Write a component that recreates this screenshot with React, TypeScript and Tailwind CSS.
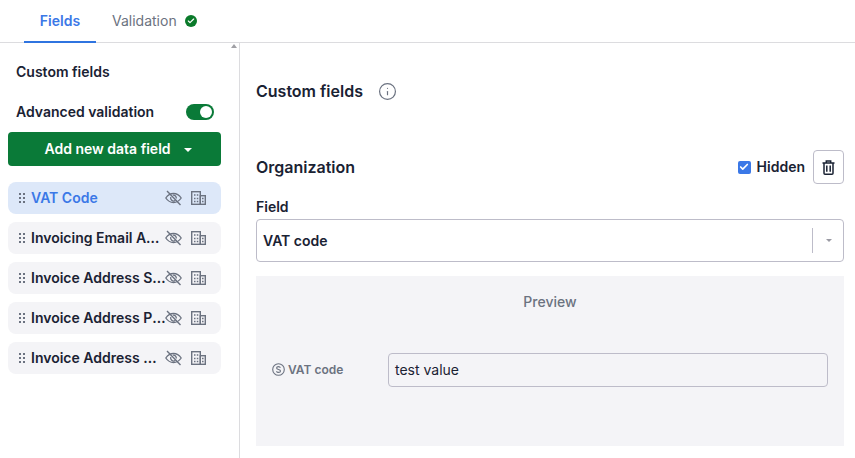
import { Check, Info } from "lucide-react";

const fields = [
  { label: "VAT Code", active: true },
  { label: "Invoicing Email Address" },
  { label: "Invoice Address Street" },
  { label: "Invoice Address Postal" },
  { label: "Invoice Address Country" },
];

function GripIcon() {
  return (
    <svg width="6" height="10" viewBox="0 0 6 10" className="shrink-0 fill-[#6b7280]">
      <rect x="0" y="0" width="2" height="2" />
      <rect x="4" y="0" width="2" height="2" />
      <rect x="0" y="4" width="2" height="2" />
      <rect x="4" y="4" width="2" height="2" />
      <rect x="0" y="8" width="2" height="2" />
      <rect x="4" y="8" width="2" height="2" />
    </svg>
  );
}

function EyeSlashIcon() {
  return (
    <svg width="17" height="16" viewBox="0 0 17 16" fill="none" className="shrink-0 stroke-[#6b7280]" strokeWidth="1.3">
      <path d="M0.8 8C2.8 5 5.4 3.5 8.5 3.5S14.2 5 16.2 8c-2 3-4.6 4.5-7.7 4.5S2.8 11 .8 8Z" />
      <path d="M5.8 7a3 3 0 0 0 4.6 3.4M11.3 8.5A3 3 0 0 0 8 5.1" />
      <path d="M2 1l13.5 14" strokeWidth="1.4" />
    </svg>
  );
}

function BuildingIcon() {
  return (
    <svg width="15" height="14" viewBox="0 0 15 14" fill="none" className="shrink-0 stroke-[#6b7280]" strokeWidth="1.4">
      <rect x="0.7" y="0.7" width="8.6" height="12.6" />
      <rect x="9.3" y="4.7" width="5" height="8.6" />
      <path d="M3 4h1.5M5.8 4h1.5M3 7.5h1.5M5.8 7.5h1.5M3 10.5h1.5M5.8 10.5h1.5M11 7.5h1.6M11 10.5h1.6" />
    </svg>
  );
}

function TrashIcon() {
  return (
    <svg width="13" height="15" viewBox="0 0 13 15" fill="none" className="stroke-[#1a2233]" strokeWidth="1.5">
      <path d="M0.5 3h12M4.3 3V.9h4.4V3" />
      <path d="M2 3v10.2c0 .6.4 1 1 1h7c.6 0 1-.4 1-1V3" />
      <path d="M4.8 5.5v6.2M8.2 5.5v6.2" />
    </svg>
  );
}

function SIcon() {
  return (
    <svg width="13" height="13" viewBox="0 0 13 13" fill="none" className="shrink-0 stroke-[#6b7280]">
      <circle cx="6.5" cy="6.5" r="5.8" strokeWidth="1.1" />
      <path d="M8.4 4.8c-.3-.8-1-1.2-1.9-1.2-1 0-1.9.5-1.9 1.4 0 2 3.9 1 3.9 3 0 .9-.9 1.4-2 1.4-.9 0-1.7-.4-2-1.2" strokeWidth="1.1" />
    </svg>
  );
}

function FieldRow({ label, active }: { label: string; active?: boolean }) {
  return (
    <div className={`flex items-center h-8 pl-[11px] rounded-lg ${active ? "bg-[#dde8f9]" : "bg-[#f4f4f7]"}`}>
      <GripIcon />
      <span className={`ml-[6px] w-[135px] -mr-px shrink-0 truncate text-sm font-semibold ${active ? "text-[#3b78e7]" : "text-[#1a2233]"}`}>
        {label}
      </span>
      <EyeSlashIcon />
      <span className="ml-[9px] flex">
        <BuildingIcon />
      </span>
    </div>
  );
}

export default function App() {
  return (
    <div className="w-[855px] h-[458px] overflow-hidden bg-white font-['Inter',sans-serif] text-[#1a2233]">
      <div className="flex h-[43px] pl-6 border-b border-[#dcdcdf]">
        <div className="relative flex items-center justify-center w-[72px] text-sm font-semibold text-[#3b78e7]">
          Fields
          <span className="absolute left-0 right-0 -bottom-px h-[2px] bg-[#2f74e0]" />
        </div>
        <div className="flex items-center ml-4 text-sm text-[#6b7280]">
          Validation
          <span className="ml-2 flex items-center justify-center w-[12px] h-[12px] rounded-full bg-[#0a7a2a]">
            <Check size={8} strokeWidth={3.5} className="text-white" />
          </span>
        </div>
      </div>

      <div className="flex h-[415px]">
        <div className="relative w-[240px] shrink-0 border-r border-[#dcdcdf] px-2">
          <span className="absolute top-[1px] right-[2px] w-0 h-0 border-x-[3px] border-x-transparent border-b-[4px] border-b-[#a0a0a5]" />
          <div className="pl-2 pt-5 text-sm font-semibold leading-[17px]">Custom fields</div>
          <div className="flex items-center justify-between pl-2 pr-[17px] mt-6 h-4">
            <span className="text-sm font-semibold">Advanced validation</span>
            <span className="flex items-center justify-end w-[28px] h-4 rounded-full bg-[#0a7a38] pr-[2px]">
              <span className="w-3 h-3 rounded-full bg-white" />
            </span>
          </div>
          <button
            type="button"
            className="flex items-center justify-center w-[213px] h-[34px] mt-3 pl-[7px] rounded bg-[#0a7a38] text-sm font-semibold text-white"
          >
            Add new data field
            <span className="ml-[13px] mt-[2px] w-0 h-0 border-x-[4px] border-x-transparent border-t-[4px] border-t-white" />
          </button>
          <div className="flex flex-col gap-2 w-[213px] mt-4">
            {fields.map((f) => (
              <FieldRow key={f.label} label={f.label} active={f.active} />
            ))}
          </div>
        </div>

        <div className="flex-1 pl-4 pr-[11px]">
          <div className="flex items-center mt-[37px] h-[22px]">
            <span className="text-base font-semibold">Custom fields</span>
            <Info size={19} strokeWidth={1.5} className="ml-[15px] text-[#6b7280]" />
          </div>
          <div className="flex items-center justify-between mt-[47px] h-[36px]">
            <span className="text-base font-semibold">Organization</span>
            <div className="flex items-center">
              <span className="flex items-center justify-center w-[13px] h-[13px] rounded-[2px] bg-[#3b78e7]">
                <Check size={10} strokeWidth={4} className="text-white" />
              </span>
              <span className="ml-[6px] text-sm font-semibold">Hidden</span>
              <span className="flex items-center justify-center ml-2 w-[31px] h-[34px] border border-[#bdbcc9] rounded">
                <TrashIcon />
              </span>
            </div>
          </div>
          <div className="mt-[13px] text-sm font-semibold leading-[17px]">Field</div>
          <div className="flex items-center h-[43px] mt-1 pl-[6px] border border-[#bdbcc9] rounded">
            <span className="flex-1 text-sm font-semibold">VAT code</span>
            <span className="w-px h-[25px] bg-[#bdbcc9] -translate-x-[2px]" />
            <span className="mx-[11px] w-0 h-0 border-x-[3px] border-x-transparent border-t-[3px] border-t-[#9a9aa3]" />
          </div>
          <div className="mt-[14px] h-[170px] bg-[#f4f4f7]">
            <div className="pt-[17px] text-center text-sm font-medium leading-[17px] text-[#6b7280]">Preview</div>
            <div className="flex items-center mt-[43px] pl-4 pr-4">
              <span className="-translate-y-[1px]">
                <SIcon />
              </span>
              <span className="ml-[3px] w-[100px] text-xs font-semibold text-[#6b7280]">VAT code</span>
              <div className="flex items-center flex-1 h-[34px] px-[6px] border border-[#bdbcc9] rounded text-sm text-[#1a2233]">
                test value
              </div>
            </div>
          </div>
        </div>
      </div>
    </div>
  );
}
